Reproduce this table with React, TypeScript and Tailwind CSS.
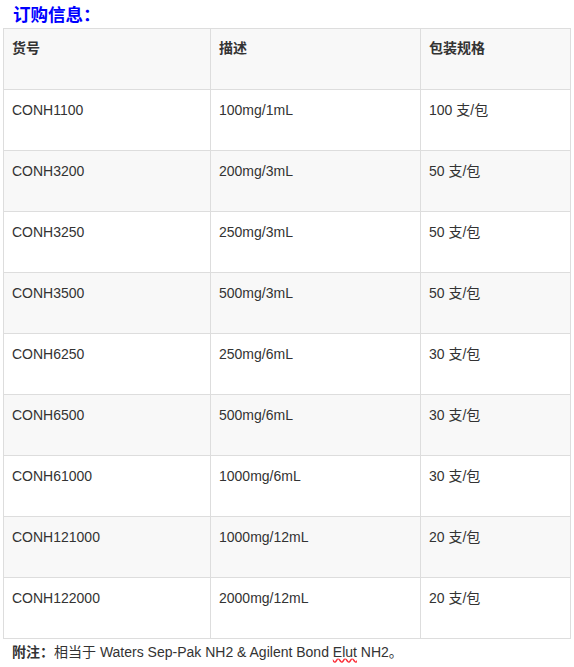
const rows = [
  ["CONH1100", "100mg/1mL", "100 支/包"],
  ["CONH3200", "200mg/3mL", "50 支/包"],
  ["CONH3250", "250mg/3mL", "50 支/包"],
  ["CONH3500", "500mg/3mL", "50 支/包"],
  ["CONH6250", "250mg/6mL", "30 支/包"],
  ["CONH6500", "500mg/6mL", "30 支/包"],
  ["CONH61000", "1000mg/6mL", "30 支/包"],
  ["CONH121000", "1000mg/12mL", "20 支/包"],
  ["CONH122000", "2000mg/12mL", "20 支/包"],
];

const font = "font-['Liberation_Sans','Noto_Sans_CJK_SC',sans-serif]";

export default function App() {
  return (
    <div className={`w-[574px] h-[667px] bg-white text-[#333] ${font}`}>
      <div className="pl-[13px] pt-[5px] h-[28px] text-[17.5px] leading-[21px] font-bold text-[#0000ff]">订购信息：</div>
      <table className="ml-[3px] w-[568px] border-collapse text-[14px] leading-[20px]">
        <colgroup>
          <col className="w-[207px]" />
          <col className="w-[210px]" />
          <col />
        </colgroup>
        <thead>
          <tr className="bg-[#f8f8f8] h-[61px]">
            {["货号", "描述", "包装规格"].map((h) => (
              <th key={h} className="border border-[#ddd] px-[8px] pt-[9px] pb-0 text-left align-top font-bold">
                {h}
              </th>
            ))}
          </tr>
        </thead>
        <tbody>
          {rows.map((r, i) => (
            <tr key={r[0]} className={`h-[61px] ${i % 2 === 1 ? "bg-[#f8f8f8]" : "bg-white"}`}>
              {r.map((c, j) => (
                <td key={j} className="border border-[#ddd] px-[8px] pt-[10px] pb-0 align-top">
                  {c}
                </td>
              ))}
            </tr>
          ))}
        </tbody>
      </table>
      <div className="pl-[12px] pt-[3px] text-[14px] leading-[20px]">
        <span className="font-bold">附注：</span>相当于 Waters Sep-Pak NH2 &amp; Agilent Bond{" "}
        <span className="underline decoration-wavy decoration-red-500">Elut</span> NH2。
      </div>
    </div>
  );
}
